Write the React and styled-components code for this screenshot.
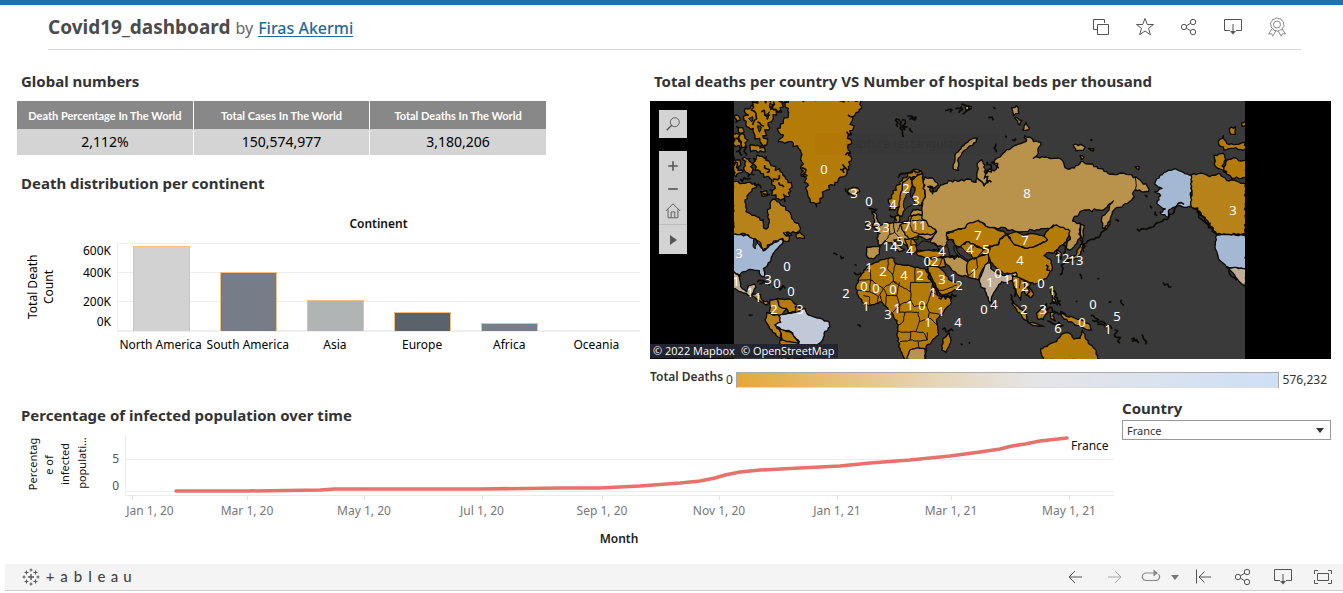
import React, { useState } from "react";
import styled, { createGlobalStyle } from "styled-components";

const GlobalStyle = createGlobalStyle`
  * { box-sizing: border-box; }
  body { margin: 0; background: #fff; font-family: "Noto Sans", "Open Sans", sans-serif; color: #333; }
  button, select { font-family: inherit; }
`;

/* ---------- page frame ---------- */

const Page = styled.div`
  border-top: 5px solid #1c73b4;
`;

const Header = styled.header`
  display: flex;
  align-items: center;
  justify-content: space-between;
  height: 45px;
  margin: 0 42px 0 48px;
  padding-right: 2px;
  border-bottom: 1px solid #d8d8d8;
`;

const Heading = styled.div`
  display: flex;
  align-items: baseline;
  gap: 5px;
  font-size: 16px;
  color: #666;
`;

const PageTitle = styled.h1`
  margin: 0;
  font-size: 19px;
  line-height: 24px;
  font-weight: 700;
  color: #4b4b4b;
`;

const AuthorLink = styled.a`
  color: #1f6b9c;
  font-weight: 500;
  text-underline-offset: 2px;
`;

const Toolbar = styled.div`
  display: flex;
  align-items: center;
`;

const IconButton = styled.button`
  display: flex;
  align-items: center;
  justify-content: center;
  width: ${(p) => p.$width || 44}px;
  height: 26px;
  padding: 0;
  border: 0;
  background: none;
  color: ${(p) => p.$color || "#555"};
`;

const Dashboard = styled.main`
  display: grid;
  grid-template-columns: minmax(0, 623fr) minmax(0, 681fr);
  column-gap: 10px;
  padding: 21px 12px 0 17px;
`;

const Title = styled.h2`
  margin: 0 0 ${(p) => (p.$tight ? 0 : 10)}px;
  padding-left: 4px;
  font-size: 15px;
  line-height: 20px;
  font-weight: 700;
  color: #333;
`;

/* ---------- summary table ---------- */

const SummaryTable = styled.table`
  width: 100%;
  max-width: 529px;
  margin-bottom: 18px;
  table-layout: fixed;
  border-collapse: collapse;
  text-align: center;

  th, td { padding: 0; border-right: 1px solid #fff; }
  th:last-child, td:last-child { border-right: 0; }
`;

const SummaryHead = styled.th`
  height: 28px;
  background: #888;
  color: #fff;
  font-family: Lato, sans-serif;
  font-size: 11px;
  font-weight: 700;
  white-space: nowrap;
`;

const SummaryCell = styled.td`
  height: 26px;
  background: #d4d4d4;
  color: #000;
  font-size: 14px;
  line-height: 20px;
`;

/* ---------- bar chart ---------- */

const ChartCaption = styled.div`
  margin-top: 23px;
  padding-left: 100px;
  text-align: center;
  font-size: 12px;
  line-height: 16px;
  font-weight: 600;
  color: #111;
`;

const BarChart = styled.div`
  display: grid;
  grid-template-columns: 48px 52px minmax(0, 1fr);
  margin-top: 11px;
  font-size: 12px;
  color: #000;
`;

const VerticalLabel = styled.div`
  height: 88px;
  writing-mode: vertical-rl;
  transform: rotate(180deg);
  text-align: center;
  line-height: 16px;
  padding-right: 8px;
`;

const ScaleLabels = styled.div`
  display: grid;
  grid-template-rows: 22px 29px 20px 16px;
  padding-right: 6px;
  text-align: right;
  line-height: 16px;
`;

const Plot = styled.div`
  display: grid;
  grid-template-columns: repeat(6, minmax(0, 1fr));
  height: 89px;
  border-left: 1px solid #eee;
  border-bottom: 1px solid #eee;
  background: repeating-linear-gradient(#efefef 0 1px, #fff 1px 29px);
`;

const Column = styled.div`
  display: flex;
  align-items: flex-end;
  justify-content: center;
`;

const Bar = styled.div`
  width: 57px;
  background: ${(p) => p.$color};
  border: 1px solid #f0c080;
  border-bottom: 0;
`;

const CategoryRow = styled.div`
  grid-column: 3;
  display: grid;
  grid-template-columns: repeat(6, minmax(0, 1fr));
  line-height: 26px;
  white-space: nowrap;
`;

const Category = styled.span`
  display: flex;
  justify-content: center;
`;

/* ---------- map ---------- */

const MapFrame = styled.div`
  position: relative;
  height: 258px;
  background: #000;
`;

const MapDrawing = styled.svg`
  display: block;
  width: 100%;
  height: 100%;
`;

const MapControls = styled.div`
  position: absolute;
  top: 9px;
  left: 9px;
  display: flex;
  flex-direction: column;
  gap: 13px;
`;

const ControlGroup = styled.div`
  display: flex;
  flex-direction: column;
  background: #d3d3d3;
`;

const MapButton = styled.button`
  display: flex;
  align-items: center;
  justify-content: center;
  width: 28px;
  height: ${(p) => p.$height || 22}px;
  padding: 0;
  border: 0;
  border-top: ${(p) => (p.$divided ? "1px solid #bdbdbd" : "0")};
  background: none;
  color: #555;
`;

const Attribution = styled.div`
  position: absolute;
  left: 0;
  bottom: 1px;
  display: flex;
  gap: 6px;
  padding: 0 3px;
  background: #23242f;
  color: #fff;
  font-family: "Open Sans", sans-serif;
  font-size: 11px;
  line-height: 14px;
`;

const Legend = styled.div`
  display: flex;
  align-items: center;
  gap: 3px;
  margin-top: 12px;
  font-size: 12px;
  line-height: 16px;
`;

const LegendTitle = styled.span`
  font-weight: 600;
  line-height: 12px;
  padding-bottom: 6px;
`;

const LegendRamp = styled.div`
  flex: 1;
  height: 16px;
  border: 1px solid #aaa;
  border-bottom-color: #ddd;
  background: linear-gradient(90deg, #e3a838, #e6bf77 18%, #e6d5b8 37%, #e5e5e6 55%, #dbe3ee 75%, #cedff7);
`;

const LegendValue = styled.span`
  padding: 0 4px 0 1px;
`;

/* ---------- line chart and filter ---------- */

const Trend = styled.section`
  display: grid;
  grid-template-columns: minmax(0, 1fr) 209px;
  column-gap: 8px;
  padding: 9px 12px 0 17px;
`;

const TrendPanel = styled.div`
  padding-top: 7px;
`;

const TrendDrawing = styled.svg`
  display: block;
  width: 100%;
  height: auto;
  font-size: 12px;
`;

const FilterLabel = styled.label`
  display: block;
  font-size: 15px;
  line-height: 20px;
  font-weight: 700;
  color: #333;
`;

const SelectBox = styled.div`
  display: flex;
  align-items: center;
  height: 20px;
  margin-top: 2px;
  padding-right: 6px;
  border: 1px solid #999;
`;

const Select = styled.select`
  flex: 1;
  height: 18px;
  padding: 0 4px;
  border: 0;
  appearance: none;
  background: none;
  color: #333;
  font-size: 11px;
`;

/* ---------- footer ---------- */

const Footer = styled.footer`
  display: flex;
  align-items: center;
  justify-content: space-between;
  height: 27px;
  margin: 12px 0 0 5px;
  padding-left: 17px;
  border-bottom: 1px solid #ccc;
  background: #f4f4f4;
`;

const Brand = styled.a`
  display: flex;
  align-items: center;
  gap: 3px;
  color: #444;
  text-decoration: none;
`;

const Wordmark = styled.span`
  display: grid;
  grid-template-columns: 14px 14px 14px 10px 13px 13px 13px;
  text-align: center;
  font-family: Lato, sans-serif;
  font-size: 15px;
  font-weight: 500;
  line-height: 18px;
  padding-bottom: 2px;
`;

/* ---------- icons ---------- */

const Icon = ({ size = 20, children, sw = 1 }) => (
  <svg width={size} height={size} viewBox="0 0 20 20" fill="none" stroke="currentColor" strokeWidth={sw} aria-hidden="true">
    {children}
  </svg>
);

const CopyIcon = () => (
  <Icon><path d="M13.500 6V2.500H2.500v10H6M6.500 7.500h11v10h-11z" /></Icon>
);
const StarIcon = () => (
  <Icon><path d="M10 1.500l2.300 6h6.200l-5 3.900 1.900 6.300L10 14l-5.400 3.700 1.900-6.300-5-3.900h6.200z" /></Icon>
);
const ShareIcon = () => (
  <Icon>
    <circle cx="5" cy="10" r="2.700" /><circle cx="14" cy="5" r="2.700" /><circle cx="14" cy="15" r="2.700" />
    <path d="M7.400 8.700l4.300-2.400M7.400 11.300l4.300 2.400" />
  </Icon>
);
const DownloadIcon = () => (
  <Icon>
    <path d="M7 13.500H1.500v-11h17v11H13M10 7v8" />
    <path d="M7 14h6l-3 3.500z" fill="currentColor" stroke="none" />
  </Icon>
);
const RibbonIcon = () => (
  <Icon>
    <path d="M10 .8l1.900 1 2.100.1 1 1.900 1.700 1.300-.2 2.100.7 2-1.500 1.500-.8 2-2.100.4L11 14.300l-2-.8-2.100-.2-1.100-1.800-1.800-1.200.1-2.100-.8-2 1.400-1.600.7-2L7.600 2z" />
    <circle cx="10" cy="7.500" r="3.500" />
    <path d="M5 12l-3.500 5 3-.3 1.300 2.500 3-5.200M15 12l3.500 5-3-.3-1.300 2.500-3-5.200" />
  </Icon>
);
const BackIcon = () => <Icon><path d="M17 10H4M10 4l-6 6 6 6" /></Icon>;
const ForwardIcon = () => <Icon><path d="M3 10h13M10 4l6 6-6 6" /></Icon>;
const ReplayIcon = () => (
  <Icon sw={1.2}>
    <path d="M8 13.500H5a3.700 3.700 0 010-7.500h9M7 13.500h8a3.700 3.700 0 002.500-6.300" />
    <path d="M12.500 2.500L17 6l-4.500 3.500z" fill="currentColor" stroke="none" />
  </Icon>
);
const CaretIcon = () => (
  <svg width="8" height="6" aria-hidden="true"><path d="M0 1h8L4 6z" fill="currentColor" /></svg>
);
const ResetIcon = () => <Icon><path d="M3.500 2.500v14M18 10H6M11.500 4.500L6 10l5.500 5.500" /></Icon>;
const FullscreenIcon = () => (
  <Icon>
    <path d="M1.500 7V3.500H5M15 3.500h3.500V7M18.500 13v3.500H15M5 16.500H1.500V13M4.500 6.500h11v7h-11z" />
  </Icon>
);
const BrandIcon = () => (
  <svg width="18" height="18" viewBox="0 0 18 18" stroke="#555" fill="none" aria-hidden="true">
    <path d="M9 6v6M6 9h6" strokeWidth="1.400" />
    <path d="M9 .5v3M7.500 2h3M9 14.500v3M7.500 16h3M2 7.500v3M.5 9h3M16 7.500v3M14.500 9h3M4.500 2.500v4M2.500 4.500h4M13.500 2.500v4M11.500 4.500h4M4.500 11.500v4M2.500 13.500h4M13.500 11.500v4M11.500 13.500h4" />
  </svg>
);

/* ---------- map geometry: three units per pixel, one origin per sheet ---------- */

const sheet = (dx, dy) => (text) =>
  text.trim().split(/\s+/).map((pair) => {
    const [x, y] = pair.split(",").map(Number);
    return [x + dx, y + dy];
  });
const nw = sheet(0, 0);
const sw = sheet(0, 390);
const n = sheet(510, 0);
const s = sheet(510, 390);
const e = sheet(1020, 0);

const noise = (a, b) => {
  const v = Math.sin(a * 12.9898 + b * 78.233) * 43758.5453;
  return v - Math.floor(v) - 0.5;
};

/* Breaks each straight run into short uneven steps so that it reads as a coast. */
const coast = (points, rough = 7, closed = true) => {
  const out = [];
  const count = closed ? points.length : points.length - 1;
  for (let i = 0; i < count; i++) {
    const [x1, y1] = points[i];
    const [x2, y2] = points[(i + 1) % points.length];
    const length = Math.hypot(x2 - x1, y2 - y1) || 1;
    const steps = Math.max(1, Math.round(length / 7));
    for (let k = 0; k < steps; k++) {
      const t = k / steps;
      const off = k === 0 ? 0 : noise(x1 + k * 3, y2 + k) * rough;
      out.push([
        Math.round(x1 + (x2 - x1) * t - ((y2 - y1) / length) * off),
        Math.round(y1 + (y2 - y1) * t + ((x2 - x1) / length) * off),
      ]);
    }
  }
  if (!closed) out.push(points[points.length - 1]);
  return "M" + out.map((p) => p.join(" ")).join("L") + (closed ? "Z" : "");
};

const GOLD = "#b57b07";
const AMBER = "#b8821a";
const TAN = "#b9924b";
const SAND = "#bfad95";
const BLUE = "#a5b8d3";
const PALE = "#c1c9d8";
const SEA = "#3a3a3a";

const LANDS = [
  [GOLD, nw("215,14 195,30 205,60 190,85 172,100 190,120 175,140 215,140 235,160 245,200 243,235 262,265 262,290 270,312 290,335 300,310 320,285 345,262 378,242 385,215 395,190 385,165 395,140 385,120 400,100 395,80 405,60 425,40 420,14"), 14],
  [GOLD, nw("76,40 100,30 110,14 205,14 190,36 170,60 155,80 145,105 128,122 140,150 120,140 105,122 100,100 80,95 72,75 85,60"), 20],
  [GOLD, nw("90,150 135,150 136,170 92,170"), 8],
  [GOLD, nw("42,118 58,118 75,130 78,150 60,160 42,150"), 18],
  [GOLD, nw("42,185 60,195 55,215 70,230 48,245 42,240"), 18],
  [GOLD, nw("74,186 90,190 92,215 102,240 85,245 72,225"), 16],
  [GOLD, nw("42,65 55,62 62,75 48,82"), 8],
  [GOLD, nw("50,95 68,98 72,112 56,112"), 8],
  [GOLD, nw("100,190 120,184 140,185 150,205 180,230 195,245 215,270 212,290 200,305 190,298 195,320 168,310 150,285 166,280 150,250 130,236 105,225 98,205"), 15],
  [GOLD, nw("122,290 140,288 142,302 126,304"), 6],
  [AMBER, nw("38,262 90,262 110,275 85,298 75,322 78,350 110,365 130,375 132,400 145,397 142,352 160,312 178,322 205,348 215,370 235,385 242,400 232,412 198,412 215,420 200,440 188,430 150,448 130,468 115,450 108,435 85,420 38,418"), 9],
  [GOLD, sw("228,28 240,22 254,40 232,40"), 6],
  [BLUE, sw("38,28 85,32 110,45 118,60 130,78 150,60 185,42 190,50 160,85 152,110 130,130 136,155 125,155 118,137 90,133 65,142 60,155 38,135"), 5],
  [SAND, sw("38,135 58,156 62,185 80,200 86,182 104,177 108,186 92,212 70,204 38,190"), 4],
  [AMBER, sw("92,208 122,208 126,225 146,233 140,240 112,224"), 4],
  [AMBER, sw("150,225 170,222 176,240 200,250 185,272 165,270 148,262"), 5],
  [GOLD, sw("172,220 215,225 235,245 225,260 205,262 198,250 178,244"), 5],
  [GOLD, sw("226,245 256,252 250,266 226,262"), 4],
  [AMBER, sw("140,262 165,270 185,272 182,292 165,300 182,320 185,345 150,312 135,285"), 5],
  [GOLD, sw("180,312 212,322 235,350 230,360 190,358"), 4],
  [GOLD, sw("180,345 235,355 230,402 185,402"), 4],
  [PALE, sw("176,272 205,265 228,262 255,250 265,270 300,280 328,292 330,305 312,325 308,345 290,360 258,372 250,402 230,402 238,350 212,320 182,312 165,300 182,292"), 5],
  [TAN, nw("385,282 405,277 420,290 405,305 385,298"), 8],
  [TAN, nw("455,348 468,356 474,380 480,397 460,398 464,376"), 8],
  [TAN, nw("438,386 450,380 448,398 438,398"), 5],
  [GOLD, n("-5,322 10,295 30,260 60,232 85,225 98,236 70,245 45,270 35,300 30,330 15,345 -2,345"), 10],
  [AMBER, n("38,262 60,245 66,265 60,290 45,310 50,330 35,365 22,355 28,320"), 5],
  [GOLD, n("65,255 97,235 100,260 106,300 95,330 70,328 62,310 75,285"), 5],
  [AMBER, n("18,362 28,362 26,384 15,382"), 5],
  [TAN, s("-42,5 -15,-5 10,-8 30,-8 50,-10 62,-28 70,-45 96,-45 110,-22 138,18 130,36 110,45 85,35 72,50 80,75 60,88 54,68 42,58 25,40 12,45 30,65 44,74 28,80 5,52 -15,48 -30,62 -40,40 -30,25 -45,12"), 6],
  [TAN, s("-70,66 -30,66 -32,88 -50,102 -68,96"), 5],
  [AMBER, s("30,0 60,-8 70,-30 98,-30 112,-20 138,18 120,30 90,28 62,45 45,30"), 6],
  [GOLD, s("44,42 64,40 80,56 80,78 64,88 54,68"), 5],
  [GOLD, s("80,80 110,74 150,80 168,95 110,100 85,92"), 5],
  [TAN, [...n("105,245 130,250 145,270 130,280 120,272 122,290 140,288 152,270 175,258 200,258 235,252 258,262 262,205 275,194 285,210 283,250 298,222 312,228 322,214 304,202 335,180 350,164 380,150 408,140 404,122 425,130 430,140 452,142 445,175 430,190 455,185 490,190 512,192 525,218"),
    ...e("30,222 70,200 110,215 150,238 185,234 228,246 262,275 266,290 245,290 225,285 218,310 190,330 162,345 150,378 140,404 128,400 125,370 148,338 160,318 130,345 110,345 60,350 38,378 60,384 60,430 45,450 28,466 18,460 30,425 0,405"),
    ...n("490,390 480,402 440,404 400,410 380,410 340,397 300,400 265,376 235,395 200,405 170,412 176,440 162,460 120,440 140,410 112,385 95,370 95,340 106,300 100,265")], 8],
  [TAN, n("190,222 195,180 215,155 245,132 262,130 258,142 225,165 205,190 206,226"), 5],
  [TAN, n("365,38 380,32 386,55 370,62"), 6],
  [TAN, n("374,68 396,76 390,90"), 6],
  [TAN, n("408,82 418,102 398,105"), 5],
  [TAN, n("226,36 244,34 240,44 228,46"), 5],
  [TAN, e("40,150 62,148 76,156 70,166 48,168"), 6],
  [TAN, e("85,160 102,160 100,168"), 4],
  [AMBER, e("60,182 72,186 64,194"), 4],
  [AMBER, e("226,215 238,214 236,224"), 4],
  [GOLD, s("170,25 200,15 225,10 235,-5 265,-13 300,8 340,18 352,28 330,42 325,60 300,62 280,75 255,60 230,50 212,65 195,60 190,45 174,45"), 5],
  [GOLD, s("195,62 212,65 230,50 255,60 280,75 302,65 300,85 270,92 248,102 230,88 205,84"), 5],
  [TAN, s("160,95 180,98 205,93 236,110 230,130 238,155 205,150 185,135 165,112"), 4],
  [GOLD, s("235,108 260,98 296,86 296,108 285,125 272,145 265,165 235,157 230,130"), 4],
  [GOLD, s("300,65 325,60 330,42 352,28 375,60 412,70 440,62 472,45 462,34 478,10 500,0 540,18 530,50 505,70 492,84 470,84 462,92 484,108 486,135 470,160 440,176 420,174 400,164 378,160 368,145 340,145 320,130 302,112 295,90"), 5],
  [GOLD, s("352,28 380,20 400,30 430,26 462,34 472,45 440,61 412,70 375,60"), 4],
  [GOLD, s("500,74 514,84 514,100 506,100"), 4],
  [SAND, s("285,120 300,112 302,130 320,144 345,152 378,142 382,150 366,166 352,172 335,170 320,190 308,210 300,234 295,225 285,190 272,185 268,165 276,145"), 4],
  [GOLD, s("366,150 392,160 402,166 422,174 414,186 432,206 424,218 408,210 402,198 394,204 392,226 376,200 370,175"), 5],
  [GOLD, s("305,232 314,240 308,248"), 3],
  [AMBER, s("368,232 385,245 410,270 416,292 396,276 380,255"), 6],
  [AMBER, s("440,265 455,250 470,236 474,262 460,284 442,280"), 6],
  [AMBER, s("414,292 440,296 462,304 430,302"), 4],
  [AMBER, s("480,262 500,262 488,272 496,288 482,280"), 5],
  [GOLD, s("484,196 496,200 492,220 502,240 486,228"), 6],
  [AMBER, e("2,655 20,664 60,672 90,690 95,705 72,700 40,685 12,672"), 6],
  [GOLD, e("-50,795 -58,762 -30,746 -10,740 4,718 20,712 35,720 42,732 60,730 67,705 85,745 105,762 115,795"), 5],
  [GOLD, e("62,448 76,446 66,458 62,478 44,492 18,498 20,490 48,480"), 5],
  [TAN, e("62,388 72,392 68,440 62,436"), 4],
  [GOLD, s("112,102 160,97 166,125 145,126 115,122"), 4],
  [GOLD, s("110,122 145,126 166,145 180,166 198,172 216,170 206,190 160,212 150,205 130,170 115,140"), 4],
  [GOLD, s("-65,120 -30,106 -5,100 12,100 16,115 30,118 60,122 75,128 105,130 120,155 130,180 150,214 186,217 180,240 150,270 140,290 146,330 125,350 108,365 108,405 45,405 30,370 22,335 25,300 10,270 0,260 -12,245 -30,230 -60,242 -78,236 -95,212 -103,190 -95,165 -78,135"), 5],
  [TAN, s("60,375 82,368 106,372 104,405 50,405"), 4],
  [GOLD, s("158,342 178,324 183,345 168,382 155,375"), 4],
  [BLUE, e("290,252 325,226 345,221 370,232 394,240 394,335 352,333 326,345 326,368 300,352 316,342 290,325 302,302 284,290 306,280 284,268"), 6],
  [AMBER, e("394,240 430,236 450,245 480,235 500,256 530,258 557,266 557,418 470,418 440,375 412,345 394,335"), 6],
  [GOLD, e("462,180 490,175 498,192 486,212 500,236 480,222 465,212"), 6],
  [GOLD, e("500,196 530,190 557,196 557,248 524,250 500,238 492,216"), 12],
  [GOLD, e("475,140 490,122 500,145 528,148 557,144 557,162 528,158 500,164 478,152"), 10],
  [GOLD, e("508,102 526,95 526,118 512,118"), 8],
  [GOLD, e("545,84 557,80 557,92 546,94"), 6],
  [BLUE, e("470,420 557,420 557,522 500,516 475,490 465,455"), 4],
  [SAND, e("500,516 557,522 557,578 535,556 515,530"), 4],
];

const WATERS = [
  s("168,52 184,44 194,58 192,74 204,90 182,96 176,78"),
  s("78,62 100,48 132,56 150,74 110,76 84,78"),
  n("48,300 62,292 62,306 76,322 60,334 46,344 40,330"),
  sw("100,44 110,48 106,72 100,66"),
  sw("110,48 122,52 124,66 114,58"),
  s("200,70 214,66 250,100 236,106 212,92"),
  nw("136,60 148,50 142,74"),
  nw("112,92 124,96 118,112"),
  nw("150,24 162,30 150,40"),
  nw("86,70 98,64 96,80"),
];

const BORDERS = [
  s("-78,135 -58,135 -58,165 -98,165"), s("-58,165 -20,190 10,170 20,172"), s("-5,100 -8,130 8,150 16,115"),
  s("8,150 12,172 62,200"), s("75,128 75,172 62,172 62,200"), s("75,172 128,172"), s("-98,195 -62,200 -58,165"),
  s("-62,200 -35,215 -20,190"), s("-20,190 -10,210 -12,245"), s("-10,210 20,212 28,172"), s("20,212 30,240 62,225 62,200"),
  s("30,240 8,262"), s("62,225 72,245 110,240 124,200 128,172"), s("124,200 148,214"), s("110,240 118,262 148,268"),
  s("30,240 28,262 44,262 40,290 25,300"), s("44,262 85,262 88,290 78,320 40,322 24,318"), s("88,290 120,280 142,300"),
  s("62,320 60,345 30,350"), s("78,320 100,322 112,345 80,348 60,345"), s("85,350 88,372"), s("112,322 112,345"),
  s("118,262 112,285"), s("-35,215 -38,238"), s("-80,212 -62,215 -60,240"), s("-28,212 -25,232"), s("145,126 160,97"),
  s("160,196 200,180"), s("135,196 160,196"), s("260,98 262,130 236,152"), s("60,-8 66,18 90,28"), s("10,-8 14,22 30,38"),
  s("-15,48 0,28 14,22"), s("0,28 -4,-4"), s("30,0 22,20"), s("62,-28 98,-30"), s("66,-14 104,-14"), s("64,40 62,60 80,60"),
  s("255,60 240,82 250,100"), s("280,75 266,92"), s("390,160 388,190"), s("402,166 404,196"), e("227,245 228,286"),
  n("70,245 66,265"),
];

const INKED = [
  n("20,72 34,82 30,100 40,126"), n("36,74 46,86 44,104 52,96"), n("52,64 78,66 76,74 58,74"), n("58,98 68,112"),
  n("165,46 186,44 180,52"), n("196,42 214,36 206,54"), n("214,28 236,34 230,48 218,58"), n("236,40 246,40"),
  n("295,68 310,76"), n("310,36 316,42"), n("346,122 350,128"), n("366,134 378,130"), n("318,146 320,172"),
  n("292,200 304,222 290,236"), n("310,200 326,220"), n("262,250 282,272 296,262"), n("284,246 304,262"),
  n("112,274 130,284 128,298"), n("24,248 44,236 70,224 94,228"), n("0,360 20,378"),
  sw("112,172 130,168 150,180"), sw("118,176 136,176"), sw("158,186 196,190"), sw("86,270 98,270"), sw("206,200 212,212"),
  sw("340,84 352,90"), sw("362,92 372,98"), sw("404,118 410,122"), sw("402,142 424,144"), sw("412,300 422,306"),
  s("110,132 126,166 146,214"), s("146,218 200,212"), s("180,94 208,98"), s("370,188 374,216"), s("362,208 366,238"),
  s("500,84 512,104"), s("520,60 526,92"), s("468,120 480,136"), s("490,186 496,216 512,228"), s("466,248 496,258"),
  s("480,236 512,242"), s("472,288 520,300"), s("500,262 540,276"), s("410,186 418,214"), s("156,314 190,318"),
  s("212,356 218,360"), s("236,352 240,356"),
  e("230,402 268,398 300,382 326,366"), e("326,366 350,332 372,328"), e("398,338 420,352 440,384 470,416"),
  e("416,350 424,372 446,400"), e("255,300 262,306"), e("270,332 276,340"), e("286,350 292,362"), e("166,376 176,380"),
  e("150,378 130,408 108,428 78,446"), e("68,440 72,470"), e("42,496 12,506 0,540"), e("60,536 66,552"), e("112,550 118,552"),
  e("310,562 334,576"), e("96,676 140,692"), e("112,688 156,702"), e("164,704 180,744"), e("214,732 236,744"),
  e("216,740 232,734"), e("246,718 256,748"), e("146,622 154,620"), e("184,614 192,632"), e("48,618 52,620"),
  e("92,662 118,676"), e("0,650 20,664"), e("500,516 530,556"), e("90,134 98,136"),
  nw("530,70 534,96"), nw("96,30 108,62 98,90"), nw("124,50 150,60"), nw("160,20 150,44"), nw("60,120 62,176"),
  nw("76,150 80,182"), nw("112,80 132,94"), nw("48,170 66,182"), nw("60,252 92,250"), nw("178,240 160,262"),
  nw("244,218 258,224 250,236 256,246"), nw("360,224 376,218 372,234"), nw("446,340 470,344 456,356"), nw("376,280 392,298"),
  nw("190,412 208,422"), nw("150,36 186,52"), nw("128,296 150,300"), nw("118,160 134,158"),
  nw("246,240 262,244"), nw("368,208 384,226"), nw("384,60 400,66"), nw("380,110 396,116"), nw("376,180 392,176"),
  nw("104,262 124,280"), nw("134,210 148,224 140,232"), nw("176,262 192,276"), nw("44,200 56,222"), nw("46,130 66,142"),
];

const LABELS = `0,824,170 3,854,194 0,869,202 4,893,205 2,906,189 3,916,201 8,1027,194 3,1233,211 3,868,226 3,877,228
 3,886,228 7,907,227 11,919,226 14,890,247 5,900,242 4,910,251 7,978,236 7,1025,241 4,970,250 5,986,250 4,942,252
 02,931,262 4,1020,261 12,1062,259 13,1076,261 3,739,254 0,787,267 3,768,280 0,777,284 0,791,292 1,736,282 1,750,293
 1,758,298 2,774,310 3,800,310 1,869,268 2,883,272 0,864,287 0,876,289 0,893,290 2,846,294 1,866,307 3,888,315
 4,904,276 2,920,276 3,942,280 1,953,279 2,959,286 1,974,274 1,990,283 0,998,274 1,1007,280 1,1016,284 2,1025,287
 0,1041,284 1,1052,291 1,933,293 1,897,309 1,910,306 0,922,306 1,941,312 1,928,323 4,958,323 0,984,310 4,994,305
 2,1024,310 3,1043,310 6,1058,329 0,1082,323 0,1093,305 5,1117,317 1,1108,330`
  .trim().split(/\s+/).map((item) => item.split(","));

const WorldMap = () => (
  <MapDrawing viewBox="650 101 681 258" preserveAspectRatio="xMidYMid slice" role="img" aria-label="World map of total deaths">
    <clipPath id="world"><rect x="734" y="101" width="511" height="258" /></clipPath>
    <g clipPath="url(#world)">
      <rect x="734" y="101" width="511" height="258" fill={SEA} />
      <g transform="translate(720 95) scale(0.33333)" stroke="#0c0a06" strokeLinejoin="round">
        {LANDS.map(([fill, points, rough], i) => (
          <path key={i} d={coast(points, rough)} fill={fill} strokeWidth="4" />
        ))}
        {WATERS.map((points, i) => <path key={i} d={coast(points, 5)} fill={SEA} strokeWidth="3" />)}
        {BORDERS.map((points, i) => <path key={i} d={coast(points, 3, false)} fill="none" strokeWidth="3" />)}
        {INKED.map((points, i) => <path key={i} d={coast(points, 14, false)} fill="none" strokeWidth="5" />)}
      </g>
      <rect x="815" y="133" width="192" height="22" fill="#000" opacity="0.02" />
      <text x="845" y="148" fontSize="12" fill="#000" opacity="0.08">Capture rectangulaire</text>
      <g fill="#fff" fontSize="13" textAnchor="middle">
        {LABELS.map(([value, x, y], i) => <text key={i} x={x} y={Number(y) + 4}>{value}</text>)}
      </g>
    </g>
  </MapDrawing>
);

/* ---------- data ---------- */

const CONTINENTS = [
  { name: "North America", height: 85, color: "#d2d2d2" },
  { name: "South America", height: 59, color: "#767d89" },
  { name: "Asia", height: 31, color: "#b0b4b5" },
  { name: "Europe", height: 19, color: "#5b636a" },
  { name: "Africa", height: 8, color: "#787f8a" },
  { name: "Oceania", height: 0 },
];

const MONTHS = [
  ["Jan 1, 20", 150, 132], ["Mar 1, 20", 247, 247], ["May 1, 20", 364, 364], ["Jul 1, 20", 482, 482],
  ["Sep 1, 20", 602, 602], ["Nov 1, 20", 719, 719], ["Jan 1, 21", 837, 837], ["Mar 1, 21", 951, 951], ["May 1, 21", 1069, 1069],
];

const FRANCE =
  "176,491 246,491 320,490 335,489 480,489 560,488 600,488 640,486 680,483 700,481 715,478 725,475 740,472 760,470 800,468 840,466 870,463 910,460 950,456 980,452 1000,449 1012,446 1025,444 1040,441 1067,438";

const AXIS_WORDS = [["Percentag", 37, 464], ["e of", 53, 465], ["infected", 69, 464], ["populati...", 86, 463]];

const TrendChart = () => (
  <TrendDrawing viewBox="17 425 1097 127" role="img" aria-label="Percentage of infected population over time">
    <path d="M125.500 436V495.500H1114M125 459.500h989M125 491.500h989" stroke="#ececec" fill="none" />
    {MONTHS.map(([label, x, tick]) => (
      <g key={label}>
        <path d={`M${tick}.500 495v5`} stroke="#e4e4e4" />
        <text x={x} y="515" textAnchor="middle" fill="#777">{label}</text>
      </g>
    ))}
    {AXIS_WORDS.map(([word, x, y]) => (
      <text key={word} transform={`translate(${x} ${y}) rotate(-90)`} textAnchor="middle" fontSize="11" fill="#111">{word}</text>
    ))}
    <text x="119" y="463" textAnchor="end" fill="#555">5</text>
    <text x="119" y="490" textAnchor="end" fill="#555">0</text>
    <polyline points={FRANCE} fill="none" stroke="#e8716c" strokeWidth="3.500" strokeLinecap="round" strokeLinejoin="round" />
    <text x="1071" y="450" fill="#111">France</text>
    <text x="619" y="543" textAnchor="middle" fontWeight="600" fill="#222">Month</text>
  </TrendDrawing>
);

export default function App() {
  const [country, setCountry] = useState("France");
  return (
    <Page>
      <GlobalStyle />
      <Header>
        <Heading>
          <PageTitle>Covid19_dashboard</PageTitle>
          <span>by</span>
          <AuthorLink href="#author">Firas Akermi</AuthorLink>
        </Heading>
        <Toolbar>
          <IconButton aria-label="Duplicate"><CopyIcon /></IconButton>
          <IconButton aria-label="Favorite"><StarIcon /></IconButton>
          <IconButton aria-label="Share"><ShareIcon /></IconButton>
          <IconButton aria-label="Download"><DownloadIcon /></IconButton>
          <IconButton aria-label="Nominate" $color="#888"><RibbonIcon /></IconButton>
        </Toolbar>
      </Header>

      <Dashboard>
        <section>
          <Title>Global numbers</Title>
          <SummaryTable>
            <thead>
              <tr>
                <SummaryHead scope="col">Death Percentage In The World</SummaryHead>
                <SummaryHead scope="col">Total Cases In The World</SummaryHead>
                <SummaryHead scope="col">Total Deaths In The World</SummaryHead>
              </tr>
            </thead>
            <tbody>
              <tr>
                <SummaryCell>2,112%</SummaryCell>
                <SummaryCell>150,574,977</SummaryCell>
                <SummaryCell>3,180,206</SummaryCell>
              </tr>
            </tbody>
          </SummaryTable>

          <Title>Death distribution per continent</Title>
          <ChartCaption>Continent</ChartCaption>
          <BarChart>
            <VerticalLabel>Total Death<br />Count</VerticalLabel>
            <ScaleLabels>
              <span>600K</span><span>400K</span><span>200K</span><span>0K</span>
            </ScaleLabels>
            <Plot>
              {CONTINENTS.map((c) => (
                <Column key={c.name}>
                  {c.height > 0 && <Bar $color={c.color} style={{ height: c.height }} />}
                </Column>
              ))}
            </Plot>
            <CategoryRow>
              {CONTINENTS.map((c) => <Category key={c.name}>{c.name}</Category>)}
            </CategoryRow>
          </BarChart>
        </section>

        <section>
          <Title>Total deaths per country VS Number of hospital beds per thousand</Title>
          <MapFrame>
            <WorldMap />
            <MapControls>
              <ControlGroup>
                <MapButton $height={28} aria-label="Search">
                  <Icon size={18}><circle cx="12" cy="8" r="5" /><path d="M8.500 11.500L3 17" strokeWidth="1.500" /></Icon>
                </MapButton>
              </ControlGroup>
              <ControlGroup>
                <MapButton $height={29} aria-label="Zoom in"><Icon size={16} sw={2}><path d="M10 4v12M4 10h12" /></Icon></MapButton>
                <MapButton $height={18} aria-label="Zoom out"><Icon size={16} sw={2}><path d="M4 10h12" /></Icon></MapButton>
                <MapButton $height={26} aria-label="Reset view">
                  <Icon size={18}><path d="M2 10l8-8 8 8M4.500 8v9.500h11V8M8 17v-6h4v6" /></Icon>
                </MapButton>
                <MapButton $height={30} $divided aria-label="More tools">
                  <svg width="7" height="10"><path d="M0 0l7 5-7 5z" fill="currentColor" /></svg>
                </MapButton>
              </ControlGroup>
            </MapControls>
            <Attribution><span>© 2022 Mapbox</span><span>© OpenStreetMap</span></Attribution>
          </MapFrame>
          <Legend>
            <LegendTitle>Total Deaths</LegendTitle>
            <span>0</span>
            <LegendRamp />
            <LegendValue>576,232</LegendValue>
          </Legend>
        </section>
      </Dashboard>

      <Trend>
        <TrendPanel>
          <Title $tight>Percentage of infected population over time</Title>
          <TrendChart />
        </TrendPanel>
        <div>
          <FilterLabel htmlFor="country">Country</FilterLabel>
          <SelectBox>
            <Select id="country" value={country} onChange={(event) => setCountry(event.target.value)}>
              <option>France</option>
            </Select>
            <CaretIcon />
          </SelectBox>
        </div>
      </Trend>

      <Footer>
        <Brand href="#tableau" aria-label="Tableau">
          <BrandIcon />
          <Wordmark>
            {["+", "a", "b", "l", "e", "a", "u"].map((letter, i) => <span key={i}>{letter}</span>)}
          </Wordmark>
        </Brand>
        <Toolbar>
          <IconButton $width={40} aria-label="Undo"><BackIcon /></IconButton>
          <IconButton $width={40} $color="#aaa" aria-label="Redo"><ForwardIcon /></IconButton>
          <IconButton $width={32} $color="#888" aria-label="Replay"><ReplayIcon /></IconButton>
          <IconButton $width={16} $color="#777" aria-label="Replay speed"><CaretIcon /></IconButton>
          <IconButton $width={40} aria-label="Revert"><ResetIcon /></IconButton>
          <IconButton $width={40} aria-label="Share view"><ShareIcon /></IconButton>
          <IconButton $width={40} aria-label="Download view"><DownloadIcon /></IconButton>
          <IconButton $width={40} aria-label="Full screen"><FullscreenIcon /></IconButton>
        </Toolbar>
      </Footer>
    </Page>
  );
}
